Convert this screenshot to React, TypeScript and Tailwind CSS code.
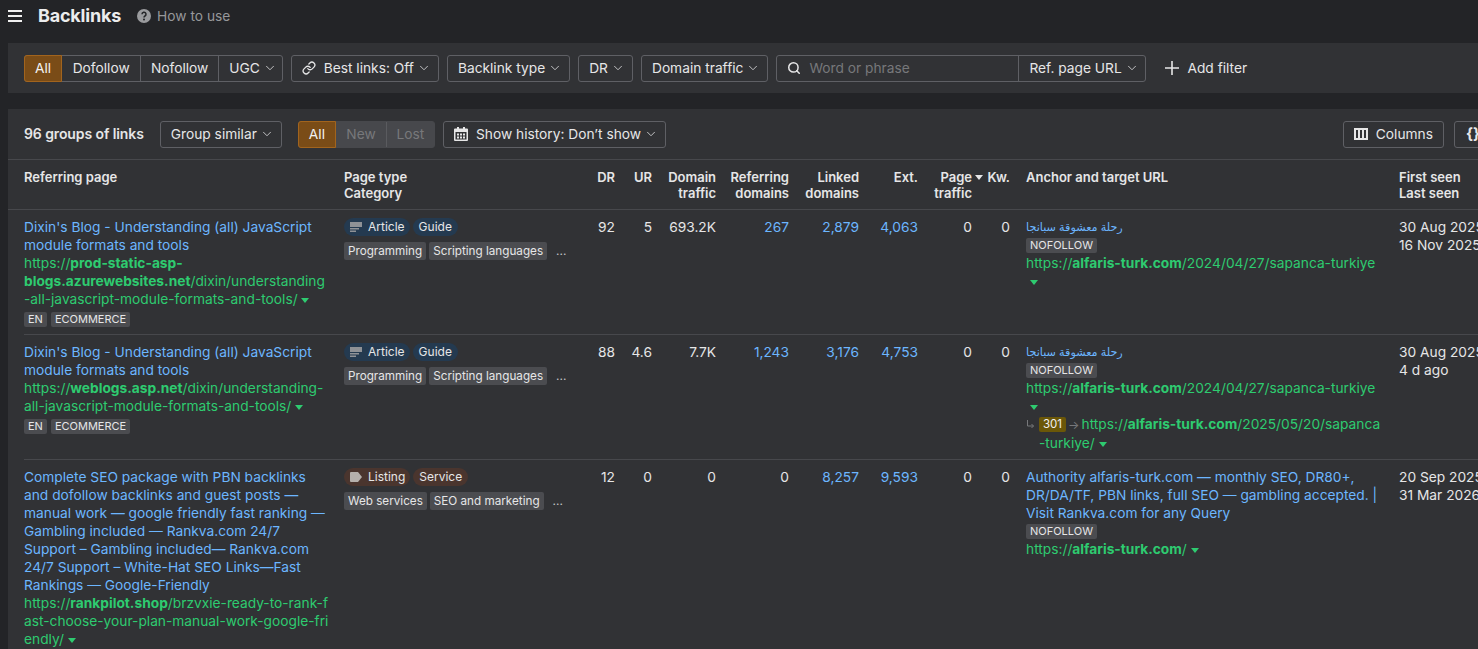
import React from 'react';
import { ChevronDown, Link as LinkIcon, Search } from 'lucide-react';

const cols = 'grid grid-cols-[312px_250px_37px_37px_64px_73px_70px_59px_54px_38px_373px_200px]';
const btn = 'flex items-center shrink-0 h-[27px] border border-[#5f6065] rounded-[3px] text-[13.75px] whitespace-nowrap';

function Chev() {
  return <ChevronDown size={14} strokeWidth={1.5} className="ml-[3px] -mr-[3px] text-[#d4d4d6]" />;
}

function Caret({ className = '' }: { className?: string }) {
  return (
    <svg width="8" height="5" viewBox="0 0 8 5" className={`inline-block align-middle ${className}`}>
      <path d="M0 0h8L4 5z" fill="#2ecb70" />
    </svg>
  );
}

function Url({ host, path, pre = 'https://' }: { host: React.ReactNode; path: React.ReactNode; pre?: string }) {
  return (
    <span className="text-[#2ecb70]">
      {pre}
      <b className="font-bold">{host}</b>
      {path}
    </span>
  );
}

function Tag({ children }: { children: React.ReactNode }) {
  return (
    <span className="inline-flex items-center h-[15px] px-[4px] rounded-[2px] bg-[#4b4c50] text-[11px] leading-[15px] text-[#e6e6e7]">
      {children}
    </span>
  );
}

function Chip({ children }: { children: React.ReactNode }) {
  return (
    <span className="inline-flex items-center h-[18px] px-[4px] rounded-[2px] bg-[#4b4c50] text-[11.7px] text-[#e6e6e7] whitespace-nowrap">
      {children}
    </span>
  );
}

function ArticleIcon() {
  return (
    <svg width="12" height="10" viewBox="0 0 12 10" className="mr-[6px]">
      <path d="M0 0h12v5H0z" fill="#8f9296" />
      <path d="M0 6h9v1.5H0zM0 8.5h6V10H0z" fill="#8f9296" />
    </svg>
  );
}

function ListingIcon() {
  return (
    <svg width="12" height="10" viewBox="0 0 12 10" className="mr-[6px]">
      <path d="M1 0h7l4 5-4 5H1a1 1 0 0 1-1-1V1a1 1 0 0 1 1-1z" fill="#b5b0ac" />
    </svg>
  );
}

function PageType({ kind, sub, cats, brown }: { kind: string; sub: string; cats: string[]; brown?: boolean }) {
  const pill = brown ? 'bg-[#4a352e]' : 'bg-[#243a50]';
  return (
    <div className="pl-2">
      <div className="flex gap-[3px] h-[18px]">
        <span className={`flex items-center h-[18px] pl-[6px] pr-[5px] rounded-full text-[12px] text-[#e6e6e7] ${pill}`}>
          {brown ? <ListingIcon /> : <ArticleIcon />}
          {kind}
        </span>
        <span className={`flex items-center h-[18px] px-[6px] rounded-full text-[12px] text-[#e6e6e7] ${pill}`}>{sub}</span>
      </div>
      <div className="flex gap-[3px] mt-[6px] items-center">
        {cats.map(c => (
          <Chip key={c}>{c}</Chip>
        ))}
        <span className="ml-[6px] text-[12px] text-[#c4c4c6]">...</span>
      </div>
    </div>
  );
}

function Num({ v, link }: { v: string; link?: boolean }) {
  return <div className={`text-right pr-2 ${link ? 'text-[#6cb6ff]' : 'text-[#e6e6e7]'}`}>{v}</div>;
}

function HeadNum({ a, b }: { a: string; b?: string }) {
  return (
    <div className="text-right pr-2">
      <div>{a}</div>
      {b && <div>{b}</div>}
    </div>
  );
}

const anchor = 'رحلة معشوقة سبانجا';

function Nums({ vals }: { vals: string[] }) {
  return (
    <>
      <Num v={vals[0]} />
      <Num v={vals[1]} />
      <Num v={vals[2]} />
      <Num v={vals[3]} link={vals[3] !== '0'} />
      <Num v={vals[4]} link />
      <Num v={vals[5]} link />
      <Num v={vals[6]} />
      <Num v={vals[7]} />
    </>
  );
}

export default function App() {
  return (
    <div
      className="w-[1478px] h-[649px] overflow-hidden bg-[#232427] text-[#e6e6e7] text-[13.75px] leading-[18px]"
      style={{ fontFamily: 'Inter, "DejaVu Sans", sans-serif' }}
    >
      <div className="flex items-center h-[43px] pb-[11px] pl-[8px]">
        <svg width="14" height="12" viewBox="0 0 14 12" className="mr-[16px]">
          <path d="M0 0h14v2H0zM0 5h14v2H0zM0 10h14v2H0z" fill="#f0f0f0" />
        </svg>
        <h1 className="text-[18px] font-bold text-[#ececed] tracking-[-0.2px]">Backlinks</h1>
        <svg width="14" height="14" viewBox="0 0 14 14" className="ml-[16px] mr-[6px]">
          <circle cx="7" cy="7" r="7" fill="#9a9b9e" />
          <path d="M5 5.3a2 2 0 1 1 3 1.7c-.7.4-1 .7-1 1.4" fill="none" stroke="#232427" strokeWidth="1.5" />
          <circle cx="7" cy="10.6" r="1" fill="#232427" />
        </svg>
        <span className="text-[#96979a]">How to use</span>
      </div>

      <div className="ml-2 h-[50px] bg-[#313235] flex items-center pl-4 gap-2">
        <div className={btn}>
          <span className="h-[27px] flex items-center px-[10px] bg-[#7a4c17] rounded-l-[3px] -ml-px border border-[#a2641d] text-[#f2f2f2]">All</span>
          <span className="w-[78px] text-center">Dofollow</span>
          <span className="h-full flex items-center w-[78px] justify-center border-l border-[#5f6065]">Nofollow</span>
          <span className="h-full flex items-center pl-[10px] pr-[8px] border-l border-[#5f6065]">UGC<Chev /></span>
        </div>
        <div className={`${btn} px-[10px]`}>
          <LinkIcon size={14} strokeWidth={2.2} className="mr-[8px]" />
          Best links: Off
          <Chev />
        </div>
        <div className={`${btn} px-[10px]`}>Backlink type<Chev /></div>
        <div className={`${btn} px-[10px]`}>DR<Chev /></div>
        <div className={`${btn} px-[10px]`}>Domain traffic<Chev /></div>
        <div className={btn}>
          <div className="flex items-center w-[241px] h-full pl-[10px]">
            <Search size={14} strokeWidth={2.6} className="mr-[8px]" />
            <span className="text-[#77787b]">Word or phrase</span>
          </div>
          <div className="h-full flex items-center w-[127px] pl-[10px] border-l border-[#5f6065]">Ref. page URL<Chev /></div>
        </div>
        <div className="flex items-center ml-[11px] text-[#e6e6e7]">
          <svg width="14" height="14" viewBox="0 0 14 14" className="mr-[8px]">
            <path d="M7 0v14M0 7h14" stroke="#e6e6e7" strokeWidth="1.6" fill="none" />
          </svg>
          Add filter
        </div>
      </div>

      <div className="ml-2 mt-[16px] bg-[#313235] h-[540px] overflow-hidden">
        <div className="h-[51px] flex items-center pl-4 border-b border-[#47484c]">
          <span className="font-semibold text-[14px] tracking-[-0.1px] mr-4 whitespace-nowrap">96 groups of links</span>
          <div className={`${btn} px-[10px]`}>Group similar<Chev /></div>
          <div className={`${btn} ml-4 border-[#47484c] bg-[#47484c]`}>
            <span className="h-[27px] flex items-center px-[10px] bg-[#7a4c17] rounded-l-[3px] -ml-px border border-[#a2641d] text-[#f2f2f2]">All</span>
            <span className="w-[50px] text-center text-[#77787b]">New</span>
            <span className="h-full flex items-center w-[48px] justify-center border-l border-[#5a5b5f] text-[#77787b]">Lost</span>
          </div>
          <div className={`${btn} ml-2 px-[10px]`}>
            <svg width="14" height="14" viewBox="0 0 14 14" className="mr-[8px]">
              <path fillRule="evenodd" d="M3 0h2v1.5h4V0h2v1.5h2a1 1 0 0 1 1 1V13a1 1 0 0 1-1 1H1a1 1 0 0 1-1-1V2.5a1 1 0 0 1 1-1h2zM1.5 5v7.5h11V5zM3 6.5h2v2H3zm3 0h2v2H6zm3 0h2v2H9zM3 9.5h2v2H3zm3 0h2v2H6zm3 0h2v2H9z" fill="#e6e6e7" />
            </svg>
            Show history: Don’t show
            <Chev />
          </div>
          <div className={`${btn} ml-auto px-[10px]`}>
            <svg width="14" height="12" viewBox="0 0 14 12" className="mr-[8px]">
              <path fillRule="evenodd" d="M0 0h14v12H0zM2 2v8h2v-8zm4 0v8h2v-8zm4 0v8h2v-8z" fill="#e6e6e7" />
            </svg>
            Columns
          </div>
          <div className={`${btn} ml-[10px] -mr-[14px] w-[38px] justify-center font-bold text-[15px]`}>{'{}'}</div>
        </div>

        <div className="border-b border-[#47484c]">
          <div className={`${cols} ml-4 h-[49px] pt-[9px] text-[13px] leading-[16px] font-semibold text-[#e6e6e7] w-max`}>
            <div>Referring page</div>
            <div className="pl-2">
              <div>Page type</div>
              <div>Category</div>
            </div>
            <HeadNum a="DR" />
            <HeadNum a="UR" />
            <HeadNum a="Domain" b="traffic" />
            <HeadNum a="Referring" b="domains" />
            <HeadNum a="Linked" b="domains" />
            <HeadNum a="Ext." />
            <div className="relative">
              <HeadNum a="Page" b="traffic" />
              <svg width="8" height="5" viewBox="0 0 8 5" className="absolute right-[-3px] top-[6px]">
                <path d="M0 0h8L4 5z" fill="#e6e6e7" />
              </svg>
            </div>
            <HeadNum a="Kw." />
            <div className="pl-2">Anchor and target URL</div>
            <div className="pl-2">
              <div>First seen</div>
              <div>Last seen</div>
            </div>
          </div>
        </div>

        <div className={`${cols} ml-4 w-max h-[125px] pt-2 border-b border-[#47484c]`}>
          <div className="pr-2">
            <div className="text-[#6cb6ff]">Dixin's Blog - Understanding (all) JavaScript module formats and tools</div>
            <div className="whitespace-nowrap">
              <Url
                host={<>prod-static-asp-<br />blogs.azurewebsites.net</>}
                path={<>/dixin/understanding<br />-all-javascript-module-formats-and-tools/</>}
              />{' '}
              <Caret />
            </div>
            <div className="flex gap-[4px] mt-[2px] h-[18px] items-center">
              <Tag>EN</Tag>
              <Tag>ECOMMERCE</Tag>
            </div>
          </div>
          <PageType kind="Article" sub="Guide" cats={['Programming', 'Scripting languages']} />
          <Nums vals={['92', '5', '693.2K', '267', '2,879', '4,063', '0', '0']} />
          <div className="pl-2 pr-2">
            <div dir="auto" className="text-left text-[#6cb6ff] text-[11.2px]">{anchor}</div>
            <div className="flex h-[18px] items-center"><Tag>NOFOLLOW</Tag></div>
            <div>
              <Url host="alfaris-turk.com" path="/2024/04/27/sapanca-turkiye" />
            </div>
            <div className="pl-1"><Caret /></div>
          </div>
          <div className="pl-2 whitespace-nowrap">
            <div>30 Aug 2025</div>
            <div>16 Nov 2025</div>
          </div>
        </div>

        <div className={`${cols} ml-4 w-max h-[125px] pt-2 border-b border-[#47484c]`}>
          <div className="pr-2">
            <div className="text-[#6cb6ff]">Dixin's Blog - Understanding (all) JavaScript module formats and tools</div>
            <div className="whitespace-nowrap">
              <Url host="weblogs.asp.net" path={<>/dixin/understanding-<br />all-javascript-module-formats-and-tools/</>} />{' '}
              <Caret />
            </div>
            <div className="flex gap-[4px] mt-[2px] h-[18px] items-center">
              <Tag>EN</Tag>
              <Tag>ECOMMERCE</Tag>
            </div>
          </div>
          <PageType kind="Article" sub="Guide" cats={['Programming', 'Scripting languages']} />
          <Nums vals={['88', '4.6', '7.7K', '1,243', '3,176', '4,753', '0', '0']} />
          <div className="pl-2">
            <div dir="auto" className="text-left text-[#6cb6ff] text-[11.2px]">{anchor}</div>
            <div className="flex h-[18px] items-center"><Tag>NOFOLLOW</Tag></div>
            <div>
              <Url host="alfaris-turk.com" path="/2024/04/27/sapanca-turkiye" />
            </div>
            <div className="pl-1"><Caret /></div>
            <div className="flex">
              <svg width="10" height="18" viewBox="0 0 10 18" className="shrink-0 mr-[3px]">
                <path d="M1.5 5v6h6M5.5 9l2 2-2 2" fill="none" stroke="#77787b" strokeWidth="1" />
              </svg>
              <div className="whitespace-nowrap">
                <span className="inline-flex items-center h-[15px] px-[4px] rounded-[2px] bg-[#6b5708] text-[11.5px] text-[#f0f0f0] align-[1px]">301</span>
                <span className="text-[#77787b] text-[12px] mx-[2px]">→</span>
                <Url host="alfaris-turk.com" path={<>/2025/05/20/sapanca<br />-turkiye/</>} />{' '}
                <Caret />
              </div>
            </div>
          </div>
          <div className="pl-2 whitespace-nowrap">
            <div>30 Aug 2025</div>
            <div>4 d ago</div>
          </div>
        </div>

        <div className={`${cols} ml-4 w-max pt-2`}>
          <div className="pr-2">
            <div className="text-[#6cb6ff]">
              Complete SEO package with PBN backlinks and dofollow backlinks and guest posts — manual work — google friendly fast ranking — Gambling included — Rankva.com 24/7 Support – Gambling included— Rankva.com 24/7 Support – White-Hat SEO Links—Fast Rankings — Google-Friendly
            </div>
            <div className="whitespace-nowrap">
              <Url
                host="rankpilot.shop"
                path={<>/brzvxie-ready-to-rank-f<br />ast-choose-your-plan-manual-work-google-fri<br />endly/</>}
              />{' '}
              <Caret />
            </div>
          </div>
          <PageType kind="Listing" sub="Service" cats={['Web services', 'SEO and marketing']} brown />
          <Nums vals={['12', '0', '0', '0', '8,257', '9,593', '0', '0']} />
          <div className="pl-2 pr-2">
            <div className="text-[#6cb6ff]">
              Authority alfaris-turk.com — monthly SEO, DR80+, DR/DA/TF, PBN links, full SEO — gambling accepted. | Visit Rankva.com for any Query
            </div>
            <div className="flex h-[18px] items-center"><Tag>NOFOLLOW</Tag></div>
            <div>
              <Url host="alfaris-turk.com" path="/" /> <Caret />
            </div>
          </div>
          <div className="pl-2 whitespace-nowrap">
            <div>20 Sep 2025</div>
            <div>31 Mar 2026</div>
          </div>
        </div>
      </div>
    </div>
  );
}
